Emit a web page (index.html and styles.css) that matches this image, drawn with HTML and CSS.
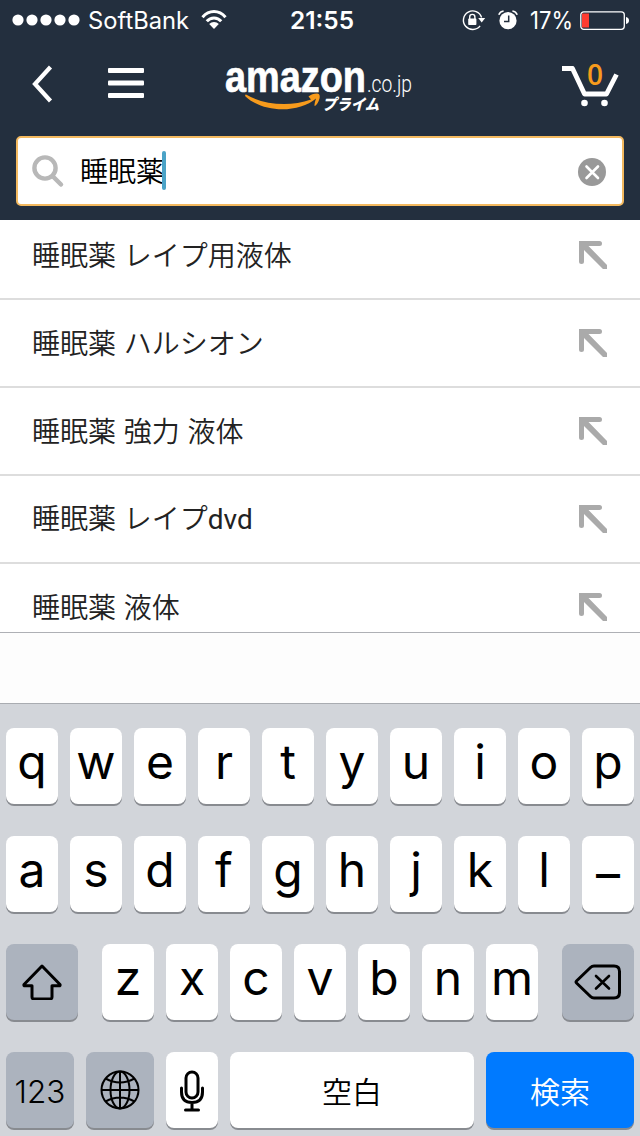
FILE: index.html
```html
<!DOCTYPE html>
<html lang="ja">
<head>
<meta charset="utf-8">
<title>amazon.co.jp</title>
<link rel="stylesheet" href="styles.css">
</head>
<body>
<div class="screen">
  <header class="header">
    <div class="status">
      <svg class="signal" width="68" height="12" viewBox="0 0 68 12" fill="#fff"><circle cx="6" cy="6" r="5.6"/><circle cx="20" cy="6" r="5.6"/><circle cx="34" cy="6" r="5.6"/><circle cx="48" cy="6" r="5.6"/><circle cx="62" cy="6" r="5.6"/></svg>
      <svg class="carrier" width="104" height="32"><text x="0" y="25" textLength="101" lengthAdjust="spacingAndGlyphs">SoftBank</text></svg>
      <svg class="wifi" width="26" height="20" viewBox="0 0 26 20" fill="none" stroke="#fff" stroke-width="3"><path d="M1.5 7.2C8-.3 18-.3 24.5 7.2M5.800 11.300c4-4.400 10.400-4.400 14.400 0"/><path d="M8.200 14c2.600-2.800 7-2.800 9.600 0L13 19z" fill="#fff" stroke="none"/></svg>
      <svg class="time" width="68" height="32"><text x="0" y="25" textLength="64" lengthAdjust="spacingAndGlyphs">21:55</text></svg>
      <svg class="lock" width="24" height="22" viewBox="0 0 24 22"><path d="M18.100 16.900A9.300 9.300 0 1 1 19.600 8.500" fill="none" stroke="#fff" stroke-width="1.400"/><path d="M16.200 9h7l-3.500 4.600z" fill="#fff"/><rect x="6.200" y="9.600" width="8.200" height="6.400" rx=".8" fill="#fff"/><path d="M7.700 10V8a2.600 2.600 0 0 1 5.200 0v2" fill="none" stroke="#fff" stroke-width="1.400"/></svg>
      <svg class="alarm" width="20" height="20" viewBox="0 0 20 20"><circle cx="10" cy="10.700" r="8.600" fill="#fff"/><path d="M10.700 5.500v6H6" fill="none" stroke="#232f3e" stroke-width="1.500"/><path d="M.8 4.800Q2 1.500 5.600 1M19.200 4.800Q18 1.500 14.400 1" fill="none" stroke="#fff" stroke-width="1.600"/></svg>
      <svg class="percent" width="46" height="32"><text x="0" y="25" textLength="43" lengthAdjust="spacingAndGlyphs">17%</text></svg>
      <svg class="battery" width="50" height="20" viewBox="0 0 50 20"><rect x=".8" y=".8" width="43.500" height="17.500" rx="3" fill="none" stroke="#fff" stroke-width="1.300"/><path d="M2 2.500h7v14H2z" fill="#ff3b30"/><path d="M46 6q3 .8 3 3.500T46 13z" fill="#fff"/></svg>
    </div>
    <div class="nav">
      <svg class="back" width="24" height="40" viewBox="0 0 24 40"><path d="M21.500 3 6 20l15.500 17" fill="none" stroke="#fff" stroke-width="4.200"/></svg>
      <svg class="menu" width="36" height="30" viewBox="0 0 36 30" fill="#fff"><rect width="36" height="5" rx="1"/><rect y="12.500" width="36" height="5" rx="1"/><rect y="25" width="36" height="5" rx="1"/></svg>
      <svg class="logo" width="192" height="60" viewBox="0 -4 192 60">
        <text class="logo-name" x="0" y="32" textLength="141" lengthAdjust="spacingAndGlyphs">amazon</text>
        <text class="logo-domain" x="142" y="32" textLength="45" lengthAdjust="spacingAndGlyphs">.co.jp</text>
        <path d="M21 34.500C38 44.500 64 47.500 86 39.500L83.500 36.500Q87 33.500 92 33.500Q95.500 33.500 94.500 38.500Q93 44 90 46Q88.500 46 91 38.500C74 53 39 53.500 20.500 36.500Q19.500 34.800 21 34.500z" fill="#f79b1c"/>
        <text class="logo-prime" transform="translate(97 50) skewX(-14)" textLength="57" lengthAdjust="spacingAndGlyphs">プライム</text>
      </svg>
      <svg class="cart" width="58" height="50" viewBox="0 -6 58 50"><path d="M1 4.500h10.500L23.500 30h22L55.500 10.500" fill="none" stroke="#fff" stroke-width="4.800" stroke-linejoin="round"/><circle cx="23.500" cy="39" r="3.300" fill="#fff"/><circle cx="43.500" cy="39" r="3.300" fill="#fff"/><text class="cart-count" x="34" y="20.500" text-anchor="middle">0</text></svg>
    </div>
    <div class="search">
      <svg class="magnifier" width="34" height="34" viewBox="0 0 34 34" fill="none" stroke="#b8b8b8"><circle cx="14" cy="14" r="10.600" stroke-width="4.400"/><path d="m22 22.500 8 8" stroke-width="4.500" stroke-linecap="round"/></svg>
      <span class="query">睡眠薬</span><span class="caret"></span>
      <svg class="clear" width="28" height="28" viewBox="0 0 28 28"><circle cx="14" cy="14" r="14" fill="#999"/><path d="m8.500 8.500 11.500 11.500M20 8.500 8.500 20" stroke="#fff" stroke-width="2.600" stroke-linecap="round"/></svg>
    </div>
  </header>
  <svg class="defs" width="0" height="0"><symbol id="fill-in" viewBox="0 0 30 30"><path d="M1 1h20.500a2.300 2.300 0 0 1 0 5H10.500L29 25v4h-4L6 10v11.500a2.500 2.500 0 0 1-5 0z" fill="#aaa"/></symbol></svg>
  <ul class="suggestions">
    <li class="suggestion"><span>睡眠薬 レイプ用液体</span><svg class="arrow"><use href="#fill-in"/></svg></li>
    <li class="suggestion"><span>睡眠薬 ハルシオン</span><svg class="arrow"><use href="#fill-in"/></svg></li>
    <li class="suggestion"><span>睡眠薬 強力 液体</span><svg class="arrow"><use href="#fill-in"/></svg></li>
    <li class="suggestion"><span>睡眠薬 レイプ<span class="latin">dvd</span></span><svg class="arrow"><use href="#fill-in"/></svg></li>
    <li class="suggestion"><span>睡眠薬 液体</span><svg class="arrow"><use href="#fill-in"/></svg></li>
  </ul>
  <div class="candidates"></div>
  <div class="keyboard">
    <div class="keys">
      <div class="key">q</div><div class="key">w</div><div class="key">e</div><div class="key">r</div><div class="key">t</div><div class="key">y</div><div class="key">u</div><div class="key">i</div><div class="key">o</div><div class="key">p</div>
    </div>
    <div class="keys">
      <div class="key">a</div><div class="key">s</div><div class="key">d</div><div class="key">f</div><div class="key">g</div><div class="key">h</div><div class="key">j</div><div class="key">k</div><div class="key">l</div><div class="key dash">–</div>
    </div>
    <div class="keys spread">
      <div class="key gray wide"><svg width="40" height="36" viewBox="0 0 40 36"><path d="M20 2 38 20.500q.5 1.300-1 1.300h-7V33q0 2-2 2H12q-2 0-2-2V21.800H3q-1.500 0-1-1.300z" fill="none" stroke="#000" stroke-width="3" stroke-linejoin="round"/></svg></div>
      <div class="letters"><div class="key">z</div><div class="key">x</div><div class="key">c</div><div class="key">v</div><div class="key">b</div><div class="key">n</div><div class="key">m</div></div>
      <div class="key gray wide"><svg class="delete" width="48" height="36" viewBox="0 0 48 36" fill="none" stroke="#000" stroke-width="3"><path d="M20 2h20q5.500 0 5.500 5.500v21q0 5.500-5.500 5.500H20q-2 0-3.500-1.500L2.500 19q-1-1 0-2l14-13.500Q18 2 20 2z"/><path d="m22 12 13 12.500M35 12 22 24.500" stroke-linecap="round" stroke-width="2.600"/></svg></div>
    </div>
    <div class="keys">
      <div class="key gray mode">123</div>
      <div class="key gray mode"><svg class="globe" width="40" height="40" viewBox="0 0 40 40" fill="none" stroke="#000" stroke-width="2"><circle cx="20" cy="20" r="18.500"/><ellipse cx="20" cy="20" rx="9.500" ry="18.500"/><path d="M20 1.500v37M1.500 20h37M5.500 8.500q14.500 8 29 0M5.500 31.500q14.500-8 29 0"/></svg></div>
      <div class="key"><svg class="mic" width="26" height="42" viewBox="0 0 26 42" fill="none" stroke="#000" stroke-width="3"><rect x="7" y="2" width="12" height="26" rx="6"/><path d="M2.500 18v4q0 10.500 10.500 10.500t10.500-10.500v-4M13 33v7M6.500 40h13" stroke-linecap="round"/></svg></div>
      <div class="key space">空白</div>
      <div class="key go">検索</div>
    </div>
  </div>
</div>
</body>
</html>
```
FILE: styles.css
```css
* { box-sizing: border-box; }
body { margin: 0; font-family: Inter, "Noto Sans CJK JP", sans-serif; }
svg { display: block; flex: none; }
.screen { display: flex; flex-direction: column; width: 640px; height: 1136px; overflow: hidden; background: #fdfdfd; }
.header { height: 220px; background: #232f3e; flex: none; }
.status { display: flex; align-items: center; height: 40px; padding-left: 12px; }
.status text { fill: #fff; font: 400 24px Inter, sans-serif; }
.carrier { margin-left: 8px; }
.wifi { margin-left: 9px; }
.time { margin-left: 63px; }
.status .time text { font-weight: 600; }
.lock { margin-left: 104px; }
.alarm { margin-left: 12px; }
.percent { margin-left: 12px; }
.battery { margin-left: 4px; margin-top: 2px; }
.nav { display: flex; height: 96px; padding-left: 29px; }
.back { margin-top: 24px; }
.menu { margin: 28px 0 0 55px; }
.logo { margin: 16px 0 0 81px; overflow: visible; }
.logo-name { fill: #fff; font: 700 44px "Liberation Sans", sans-serif; stroke: #fff; stroke-width: .7px; }
.logo-domain { fill: #fff; font: 300 23px Roboto, sans-serif; }
.logo-prime { fill: #fff; font: 900 15.500px "Noto Sans CJK JP", sans-serif; }
.cart { margin: 18px 0 0 144px; overflow: visible; }
.cart-count { fill: #f79b1c; font: 600 28px "Open Sans", sans-serif; }
.search { display: flex; align-items: center; height: 70px; margin: 0 16px; padding: 0 16px 0 13px; border: 2px solid #f3b95f; border-radius: 5px; background: #fff; }
.query { margin: -3px 0 0 15px; font: 350 28px/40px "Noto Sans CJK JP DemiLight", "Noto Sans CJK JP", sans-serif; color: #000; }
.caret { width: 4px; height: 39px; margin: -2px auto 0 -2px; border-radius: 2px; background: #4ba3c7; }
.clear { margin-top: 2px; }
.defs { position: absolute; }
.suggestions { height: 413px; margin: 0; padding: 0; overflow: hidden; flex: none; list-style: none; border-bottom: 1px solid #aeb0b5; background: #fff; }
.suggestion { display: flex; justify-content: space-between; align-items: center; height: 88px; padding: 0 32px; border-bottom: 2px solid #ddd; font: 350 28px/40px "Noto Sans CJK JP DemiLight", "Noto Sans CJK JP", sans-serif; color: #222; word-spacing: 1.500px; }
.suggestion > span { padding-bottom: 2px; }
.suggestion:first-child { margin-top: -8px; }
.latin { font-family: Roboto, sans-serif; font-weight: 400; }
.arrow { width: 30px; height: 30px; }
.candidates { height: 70px; flex: none; }
.keyboard { display: flex; flex-direction: column; gap: 32px; height: 433px; padding: 24px 6px 0; border-top: 1px solid #a9acb1; background: #d2d5da; flex: none; }
.keys, .letters { display: flex; gap: 12px; }
.spread { justify-content: space-between; }
.key { display: flex; align-items: center; justify-content: center; width: 52px; height: 76px; padding-bottom: 8px; border-radius: 8px; background: #fff; box-shadow: 0 2px 0 #888b90; font-size: 48px; font-weight: 400; line-height: 68px; color: #000; flex: none; }
.dash { padding-top: 7px; }
.gray { padding-bottom: 0; background: #acb3be; }
.wide { width: 72px; }
.mode { width: 68px; padding-top: 3px; font-size: 31.500px; font-weight: 350; }
.globe { margin-top: -4px; }
.mic { margin-top: 10px; }
.space, .go { padding-top: 0; padding-bottom: 0; font: 350 30px/44px "Noto Sans CJK JP DemiLight", "Noto Sans CJK JP", sans-serif; }
.space { width: 244px; }
.go { width: 148px; background: #007aff; color: #fff; }
```
